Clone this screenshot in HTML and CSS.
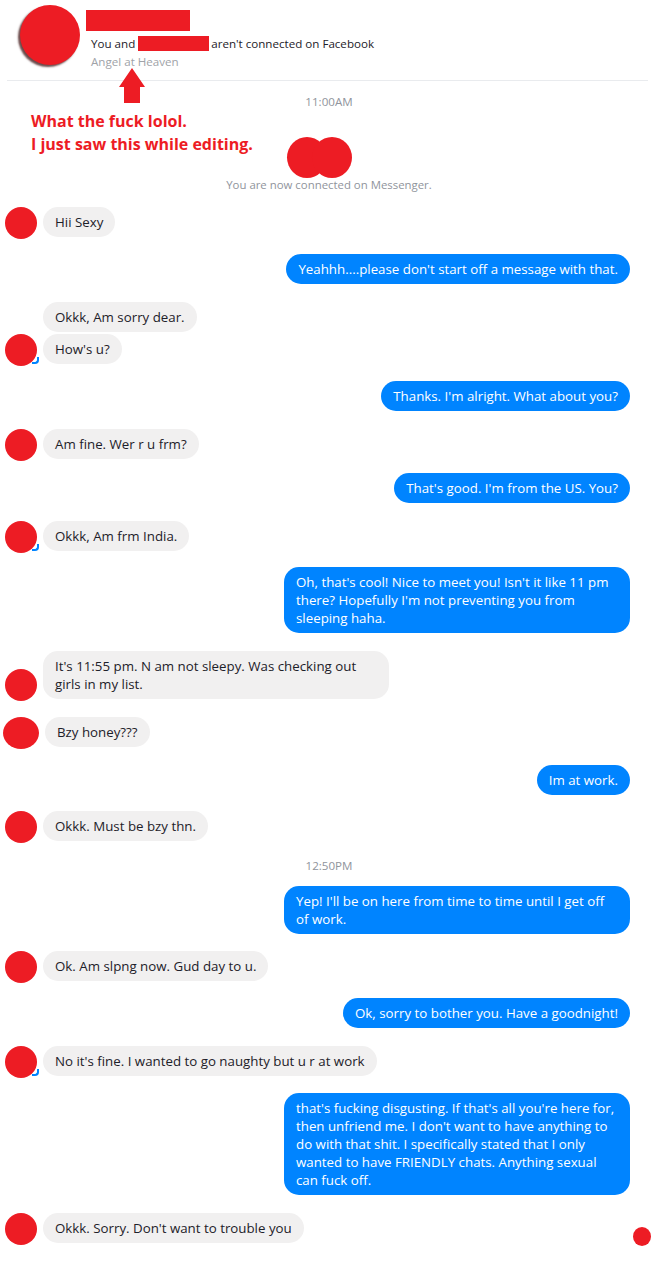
FILE: index.html
```html
<!DOCTYPE html>
<html>

<head>
  <title>Messenger</title>
  <link rel="stylesheet" href="styles.css">
</head>

<body>
  <div id="page">
    <div id="header">
      <div class="head-avatar"></div>
      <div class="head-info">
        <div class="name-redact"></div>
        <div class="connect-note">You and <span class="redact"></span>aren't connected on Facebook</div>
        <div class="place">Angel at Heaven</div>
      </div>
    </div>

    <div id="chat">
      <div class="edit-note">
        <svg class="arrow" width="26" height="36" viewBox="0 0 26 36">
          <polygon points="13,0 26,19 21,19 21,35 5,35 5,19 0,19" fill="#ed1c24" />
        </svg>
        <div class="edit-text">What the fuck lolol.<br>I just saw this while editing.</div>
      </div>

      <div class="stamp">11:00AM</div>
      <div class="pair"><span class="blob"></span><span class="blob"></span></div>
      <div class="notice">You are now connected on Messenger.</div>

      <div class="row them g14">
        <div class="avatar"></div>
        <div class="bubble">Hii Sexy</div>
      </div>
      <div class="row me g17">
        <div class="bubble">Yeahhh....please don't start off a message with that.</div>
      </div>
      <div class="row them">
        <div class="avatar empty"></div>
        <div class="bubble">Okkk, Am sorry dear.</div>
      </div>
      <div class="row them grouped">
        <div class="avatar seen"></div>
        <div class="bubble">How's u?</div>
      </div>
      <div class="row me g17">
        <div class="bubble">Thanks. I'm alright. What about you?</div>
      </div>
      <div class="row them">
        <div class="avatar"></div>
        <div class="bubble">Am fine. Wer r u frm?</div>
      </div>
      <div class="row me g14">
        <div class="bubble">That's good. I'm from the US. You?</div>
      </div>
      <div class="row them">
        <div class="avatar seen"></div>
        <div class="bubble">Okkk, Am frm India.</div>
      </div>
      <div class="row me g16">
        <div class="bubble wrap">Oh, that's cool! Nice to meet you! Isn't it like 11 pm<br>there? Hopefully I'm not preventing you from<br>sleeping haha.</div>
      </div>
      <div class="row them">
        <div class="avatar"></div>
        <div class="bubble wrap">It's 11:55 pm. N am not sleepy. Was checking out<br>girls in my list.</div>
      </div>
      <div class="row them">
        <div class="avatar wide"></div>
        <div class="bubble">Bzy honey???</div>
      </div>
      <div class="row me">
        <div class="bubble">Im at work.</div>
      </div>
      <div class="row them g16">
        <div class="avatar"></div>
        <div class="bubble">Okkk. Must be bzy thn.</div>
      </div>

      <div class="stamp mid">12:50PM</div>

      <div class="row me first">
        <div class="bubble wrap">Yep! I'll be on here from time to time until I get off<br>of work.</div>
      </div>
      <div class="row them g17">
        <div class="avatar"></div>
        <div class="bubble">Ok. Am slpng now. Gud day to u.</div>
      </div>
      <div class="row me g17">
        <div class="bubble">Ok, sorry to bother you. Have a goodnight!</div>
      </div>
      <div class="row them">
        <div class="avatar seen"></div>
        <div class="bubble">No it's fine. I wanted to go naughty but u r at work</div>
      </div>
      <div class="row me g17">
        <div class="bubble wrap">that's fucking disgusting. If that's all you're here for,<br>then unfriend me. I don't want to have anything to<br>do with that shit. I specifically stated that I only<br>wanted to have FRIENDLY chats. Anything sexual<br>can fuck off.</div>
      </div>
      <div class="row them">
        <div class="avatar"></div>
        <div class="bubble">Okkk. Sorry. Don't want to trouble you</div>
        <div class="read-dot"></div>
      </div>
    </div>
  </div>
</body>

</html>
```

FILE: styles.css
```css
* {
  font-family: "Open Sans", "Liberation Sans", sans-serif;
  box-sizing: border-box;
}

body {
  margin: 0;
  background: #fff;
  color: #1d2129;
}

#page {
  width: 658px;
}

/* header */

#header {
  display: flex;
  height: 81px;
  margin: 0 10px 0 7px;
  padding: 5px 0 0 13px;
  border-bottom: 1px solid #e9ebee;
}

.head-avatar {
  width: 60px;
  height: 60px;
  border-radius: 50%;
  background: #ed1c24;
  box-shadow: -2px 2px 2px #6b4a4a;
}

.head-info {
  margin-left: 6px;
}

.name-redact {
  width: 104px;
  height: 21px;
  margin-top: 5px;
  background: #ed1c24;
}

.connect-note {
  font-size: 11.6px;
  line-height: 16px;
  margin-top: 5px;
  padding-left: 5px;
  color: #1d2129;
}

.redact {
  display: inline-block;
  width: 71px;
  height: 15px;
  margin: 0 2px 0 0;
  vertical-align: -3px;
  background: #ed1c24;
}

.place {
  font-size: 11.6px;
  line-height: 16px;
  margin-top: 2px;
  padding-left: 5px;
  color: #a0a3a8;
}

/* chat */

#chat {
  position: relative;
  display: flex;
  flex-direction: column;
  padding: 13px 0 30px 5px;
}

.edit-note {
  position: absolute;
  top: -13px;
  left: 31px;
}

.arrow {
  display: block;
  margin-left: 88px;
}

.edit-text {
  margin-top: 6px;
  font-size: 16px;
  font-weight: bold;
  line-height: 23px;
  color: #ed1c24;
}

.stamp {
  text-align: center;
  font-size: 11.6px;
  line-height: 16px;
  color: #90949c;
  padding-right: 5px;
}

.stamp.mid {
  margin-top: 17px;
}

.pair {
  display: flex;
  justify-content: center;
  margin-top: 27px;
  padding-right: 25px;
}

.blob {
  width: 40px;
  height: 41px;
  border-radius: 50%;
  background: #ed1c24;
}

.blob + .blob {
  margin-left: -15px;
}

.notice {
  text-align: center;
  font-size: 11.4px;
  line-height: 16px;
  margin-top: -1px;
  color: #90949c;
  padding-right: 5px;
}

.row {
  display: flex;
  align-items: flex-end;
  margin-top: 18px;
}

.row.g14 {
  margin-top: 14px;
}

.row.g16 {
  margin-top: 16px;
}

.row.g17 {
  margin-top: 17px;
}

.row.grouped {
  margin-top: 2px;
}

.row.me.first {
  margin-top: 12px;
}

.row.me {
  justify-content: flex-end;
  padding-right: 28px;
}

.avatar {
  position: relative;
  width: 32px;
  height: 32px;
  margin: 0 6px -2px 0;
  border-radius: 50%;
  background: #ed1c24;
}

.avatar.wide {
  width: 36px;
  margin-left: -2px;
}

.avatar.empty {
  height: 0;
  background: none;
}

.avatar.seen::after {
  content: "";
  position: absolute;
  right: -2px;
  bottom: 2px;
  width: 5px;
  height: 5px;
  border-radius: 0 0 4px 0;
  border-right: 2px solid #0084ff;
  border-bottom: 2px solid #0084ff;
}

.bubble {
  padding: 6px 12px;
  border-radius: 15px;
  font-size: 13.3px;
  line-height: 18px;
  background: #f1f0f0;
  color: #1d2129;
}

.bubble.wrap {
  width: 346px;
}

.me .bubble {
  background: #0084ff;
  color: #fff;
}

.read-dot {
  width: 18px;
  height: 19px;
  margin: 0 7px -3px auto;
  border-radius: 50%;
  background: #ed1c24;
}
```
